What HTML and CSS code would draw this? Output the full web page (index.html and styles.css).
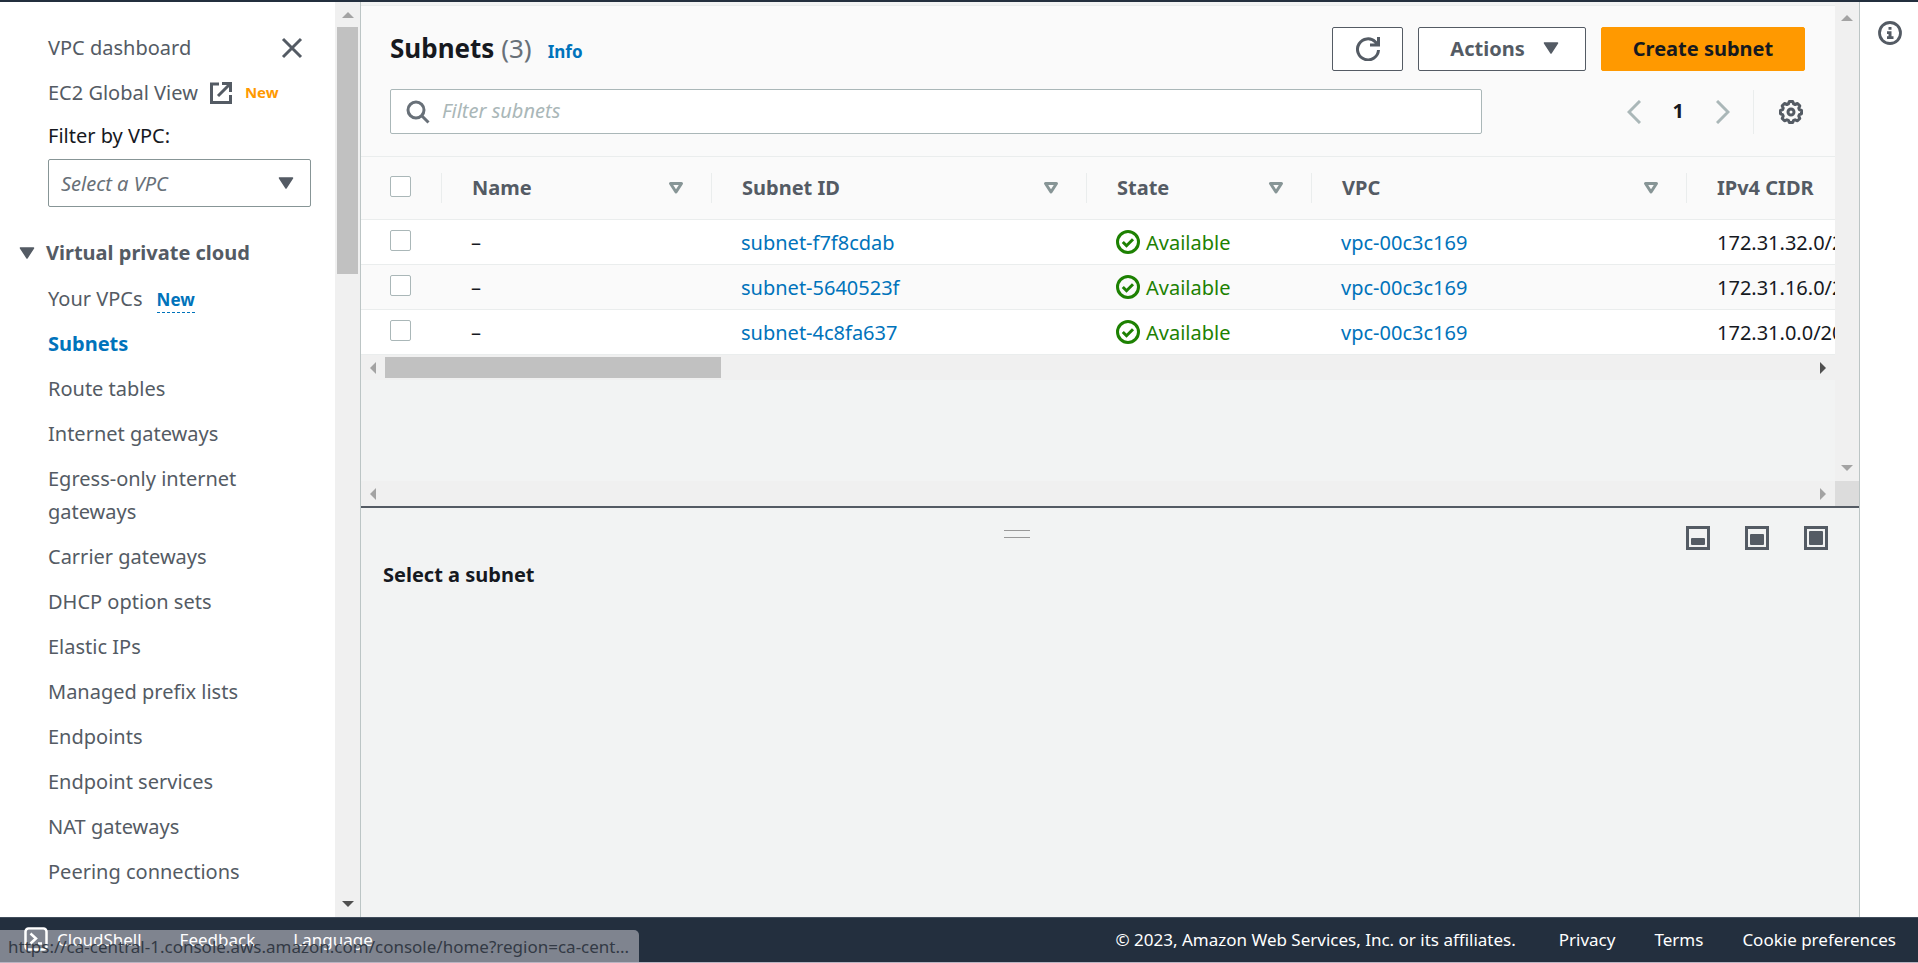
FILE: index.html
```html
<!DOCTYPE html>
<html lang="en">
<head>
<meta charset="utf-8">
<title>Subnets | VPC Management Console</title>
<link rel="stylesheet" href="styles.css">
</head>
<body>
<svg class="sprite" aria-hidden="true">
  <symbol id="sort" viewBox="0 0 16 14"><path d="M2.500 2.500h11L8 11z" fill="none" stroke="#879596" stroke-width="3" stroke-linejoin="round"/></symbol>
  <symbol id="caret" viewBox="0 0 16 14"><path d="M1.500 2h13L8 12z" fill="#545b64" stroke="#545b64" stroke-width="1.500" stroke-linejoin="round"/></symbol>
  <symbol id="ok" viewBox="0 0 24 24"><g fill="none" stroke="#1d8102" stroke-width="3"><circle cx="12" cy="12" r="10.500"/><path d="M6.800 12l3.700 3.700 6.500-6.500"/></g></symbol>
  <symbol id="up" viewBox="0 0 12 12"><path d="M0 9h12L6 3z"/></symbol>
  <symbol id="down" viewBox="0 0 12 12"><path d="M0 3h12L6 9z"/></symbol>
  <symbol id="left" viewBox="0 0 12 12"><path d="M9 0v12L3 6z"/></symbol>
  <symbol id="right" viewBox="0 0 12 12"><path d="M3 0v12l6-6z"/></symbol>
</svg>
<div class="app">
  <div class="topbar"></div>
  <div class="workspace">
    <aside class="sidebar">
      <nav class="nav">
        <div class="nav-head">
          <a class="nav-link" href="#">VPC dashboard</a>
          <button class="icon-btn" type="button" aria-label="Close navigation"><svg width="22" height="22" viewBox="0 0 22 22"><path d="M2 2l18 18M20 2L2 20" fill="none" stroke="#545b64" stroke-width="3"/></svg></button>
        </div>
        <div class="nav-line">
          <a class="nav-link" href="#">EC2 Global View</a>
          <svg class="ext" width="22" height="22" viewBox="0 0 22 22" fill="none" stroke="#545b64" stroke-width="3"><path d="M9 2H1.500v18.500H20.500V13M12 1.500h8.500V10M20 2L8 14"/></svg>
          <span class="tag-orange">New</span>
        </div>
        <label class="filter-label" for="vpc">Filter by VPC:</label>
        <div class="select-wrap">
          <select id="vpc" class="select"><option>Select a VPC</option></select>
          <svg class="select-caret" width="16" height="14"><use href="#caret"/></svg>
        </div>
        <h2 class="nav-title"><svg width="16" height="14"><use href="#caret"/></svg>Virtual private cloud</h2>
        <ul class="nav-list">
          <li><a class="nav-link" href="#">Your VPCs</a><a class="tag-blue" href="#">New</a></li>
          <li><a class="nav-link active" href="#">Subnets</a></li>
          <li><a class="nav-link" href="#">Route tables</a></li>
          <li><a class="nav-link" href="#">Internet gateways</a></li>
          <li><a class="nav-link" href="#">Egress-only internet gateways</a></li>
          <li><a class="nav-link" href="#">Carrier gateways</a></li>
          <li><a class="nav-link" href="#">DHCP option sets</a></li>
          <li><a class="nav-link" href="#">Elastic IPs</a></li>
          <li><a class="nav-link" href="#">Managed prefix lists</a></li>
          <li><a class="nav-link" href="#">Endpoints</a></li>
          <li><a class="nav-link" href="#">Endpoint services</a></li>
          <li><a class="nav-link" href="#">NAT gateways</a></li>
          <li><a class="nav-link" href="#">Peering connections</a></li>
        </ul>
      </nav>
      <div class="vbar">
        <svg class="muted" width="12" height="12"><use href="#up"/></svg>
        <div class="vtrack"><div class="vthumb"></div></div>
        <svg class="strong" width="12" height="12"><use href="#down"/></svg>
      </div>
    </aside>

    <main class="main">
      <div class="upper">
        <div class="upper-body">
          <section class="card">
            <header class="card-head">
              <div class="title-row">
                <h1 class="title">Subnets <span class="count">(3)</span></h1>
                <a class="info" href="#">Info</a>
                <div class="actions">
                  <button class="btn btn-icon" type="button" aria-label="Refresh"><svg width="24" height="24" viewBox="0 0 24 24" fill="none" stroke="#545b64" stroke-width="3"><path d="M22.500 13A10.500 10.500 0 1 1 19.500 5L22 8M22.500 0v8H14"/></svg></button>
                  <button class="btn btn-menu" type="button">Actions<svg width="16" height="14"><use href="#caret"/></svg></button>
                  <button class="btn btn-primary" type="button">Create subnet</button>
                </div>
              </div>
              <div class="filter-row">
                <div class="search">
                  <svg width="24" height="24" viewBox="0 0 24 24" fill="none" stroke="#687078" stroke-width="3"><circle cx="10" cy="10" r="8"/><path d="M15.500 15.500L22.500 22.500"/></svg>
                  <input type="text" placeholder="Filter subnets" aria-label="Filter subnets">
                </div>
                <div class="pager">
                  <button class="icon-btn" type="button" aria-label="Previous page"><svg width="14" height="24" viewBox="0 0 14 24"><path d="M13 1L2 12l11 11" fill="none" stroke="#aab7b8" stroke-width="3"/></svg></button>
                  <button class="icon-btn page" type="button">1</button>
                  <button class="icon-btn" type="button" aria-label="Next page"><svg width="14" height="24" viewBox="0 0 14 24"><path d="M1 1l11 11L1 23" fill="none" stroke="#aab7b8" stroke-width="3"/></svg></button>
                </div>
                <div class="prefs">
                  <button class="icon-btn" type="button" aria-label="Preferences"><svg width="24" height="24" viewBox="0 0 24 24" fill="none" stroke="#545b64" stroke-width="3" stroke-linejoin="round"><path d="M10.300 1.500h3.400l.9 2.400 1.500.6 2.400-1 2.300 2.300-1 2.400.6 1.500 2.100.8v3.300l-2.100.8-.6 1.500 1 2.400-2.300 2.300-2.400-1-1.500.6-.9 2.100h-3.400l-.9-2.100-1.500-.6-2.400 1-2.300-2.300 1-2.400-.6-1.500-2.100-.8v-3.300l2.100-.8.6-1.500-1-2.400 2.300-2.300 2.400 1 1.500-.6z"/><circle cx="12" cy="12" r="3"/></svg></button>
                </div>
              </div>
            </header>
            <div class="table-wrap">
              <table class="table">
                <colgroup><col class="c-check"><col class="c-name"><col class="c-id"><col class="c-state"><col class="c-vpc"><col class="c-cidr"></colgroup>
                <thead>
                  <tr>
                    <th><div class="th"><input type="checkbox" aria-label="Select all"></div></th>
                    <th><div class="th">Name<svg width="16" height="14"><use href="#sort"/></svg></div></th>
                    <th><div class="th">Subnet ID<svg width="16" height="14"><use href="#sort"/></svg></div></th>
                    <th><div class="th">State<svg width="16" height="14"><use href="#sort"/></svg></div></th>
                    <th><div class="th">VPC<svg width="16" height="14"><use href="#sort"/></svg></div></th>
                    <th><div class="th">IPv4 CIDR</div></th>
                  </tr>
                </thead>
                <tbody>
                  <tr>
                    <td><input type="checkbox" aria-label="Select subnet-f7f8cdab"></td><td>–</td>
                    <td><a href="#">subnet-f7f8cdab</a></td>
                    <td><span class="state"><svg width="24" height="24"><use href="#ok"/></svg>Available</span></td>
                    <td><a href="#">vpc-00c3c169</a></td><td>172.31.32.0/20</td>
                  </tr>
                  <tr>
                    <td><input type="checkbox" aria-label="Select subnet-5640523f"></td><td>–</td>
                    <td><a href="#">subnet-5640523f</a></td>
                    <td><span class="state"><svg width="24" height="24"><use href="#ok"/></svg>Available</span></td>
                    <td><a href="#">vpc-00c3c169</a></td><td>172.31.16.0/20</td>
                  </tr>
                  <tr>
                    <td><input type="checkbox" aria-label="Select subnet-4c8fa637"></td><td>–</td>
                    <td><a href="#">subnet-4c8fa637</a></td>
                    <td><span class="state"><svg width="24" height="24"><use href="#ok"/></svg>Available</span></td>
                    <td><a href="#">vpc-00c3c169</a></td><td>172.31.0.0/20</td>
                  </tr>
                </tbody>
              </table>
            </div>
            <div class="hbar">
              <svg class="muted" width="12" height="12"><use href="#left"/></svg>
              <div class="htrack"><div class="hthumb"></div></div>
              <svg class="strong" width="12" height="12"><use href="#right"/></svg>
            </div>
          </section>
          <div class="hbar">
            <svg class="muted" width="12" height="12"><use href="#left"/></svg>
            <div class="htrack"></div>
            <svg class="muted" width="12" height="12"><use href="#right"/></svg>
          </div>
        </div>
        <div class="upper-bar">
          <div class="vbar">
            <svg class="muted" width="12" height="12"><use href="#up"/></svg>
            <div class="vtrack"></div>
            <svg class="muted" width="12" height="12"><use href="#down"/></svg>
          </div>
          <div class="corner"></div>
        </div>
      </div>
      <section class="lower">
        <div class="lower-tools">
          <div class="grip"></div>
          <div class="layouts">
            <button class="icon-btn" type="button" aria-label="Small panel"><svg width="24" height="24" viewBox="0 0 24 24"><rect x="1.500" y="1.500" width="21" height="21" fill="none" stroke="#545b64" stroke-width="3"/><rect x="5" y="12" width="14" height="7" rx="1" fill="#545b64"/></svg></button>
            <button class="icon-btn" type="button" aria-label="Medium panel"><svg width="24" height="24" viewBox="0 0 24 24"><rect x="1.500" y="1.500" width="21" height="21" fill="none" stroke="#545b64" stroke-width="3"/><rect x="5" y="8" width="14" height="11" rx="1" fill="#545b64"/></svg></button>
            <button class="icon-btn" type="button" aria-label="Full panel"><svg width="24" height="24" viewBox="0 0 24 24"><rect x="1.500" y="1.500" width="21" height="21" fill="none" stroke="#545b64" stroke-width="3"/><rect x="5" y="5" width="14" height="14" rx="1" fill="#545b64"/></svg></button>
          </div>
        </div>
        <h2 class="lower-title">Select a subnet</h2>
      </section>
    </main>

    <aside class="help">
      <button class="icon-btn" type="button" aria-label="Open help"><svg width="24" height="24" viewBox="0 0 24 24"><circle cx="12" cy="12" r="10.500" fill="none" stroke="#545b64" stroke-width="2.800"/><path d="M10.500 6h3v2.800h-3zM9 10.300h4.500v5H15.500V18H9v-2.700h1.500v-2.300H9z" fill="#545b64"/></svg></button>
    </aside>
  </div>

  <footer class="footer">
    <a class="shell" href="#"><svg width="24" height="24" viewBox="0 0 24 24" fill="none" stroke="#fff" stroke-width="2.500"><rect x="1.500" y="1.500" width="21" height="21" rx="3"/><path d="M6.500 6.500l5.500 5-5.500 5M14 16.500h4"/></svg>CloudShell</a>
    <a class="feedback" href="#">Feedback</a>
    <a href="#">Language</a>
    <span class="copyright">© 2023, Amazon Web Services, Inc. or its affiliates.</span>
    <a class="legal" href="#">Privacy</a>
    <a class="legal" href="#">Terms</a>
    <a class="legal" href="#">Cookie preferences</a>
    <div class="status"><span class="status-url">https://ca-central-1.console.aws.amazon.com/console/home?region=ca-cent...</span></div>
  </footer>
</div>
</body>
</html>
```
FILE: styles.css
```css
* { box-sizing: border-box; }

body {
  margin: 0;
  font: 20px/33px "Noto Sans", "Open Sans", sans-serif;
  color: #16191f;
  background: #fff;
}

a { color: #0073bb; text-decoration: none; }
h1, h2, ul { margin: 0; padding: 0; }
svg { display: block; flex: none; }
.sprite { display: none; }
button, input, select { font: inherit; color: inherit; }

.app { height: 100vh; display: flex; flex-direction: column; }
.topbar { flex: none; height: 2px; background: #232f3e; }
.workspace { flex: 1; min-height: 0; display: flex; }

.icon-btn {
  display: flex;
  padding: 0;
  border: 0;
  background: none;
}

/* Sidebar */
.sidebar { flex: none; width: 361px; display: flex; border-right: 1px solid #bcc5c5; }
.nav { flex: 1; padding: 29px 24px 0 19px; overflow: hidden; }
.nav-link { color: #545b64; }
.nav-link.active { color: #0073bb; font-weight: 700; }
.nav-head { display: flex; align-items: center; justify-content: space-between; padding: 0 8px 0 29px; }
.nav-line { display: flex; align-items: center; padding-left: 29px; margin-top: 12px; }
.ext { margin-left: 12px; }
.tag-orange { margin-left: 13px; font-size: 15px; font-weight: 700; color: #ff9900; }
.filter-label { display: block; margin: 10px 0 7px 29px; }
.select-wrap { position: relative; margin-left: 29px; }
.select {
  display: block;
  width: 100%;
  height: 48px;
  padding: 0 12px;
  border: 1px solid #879596;
  border-radius: 2px;
  background: #fff;
  color: #687078;
  font-style: italic;
  appearance: none;
}
.select-caret { position: absolute; right: 17px; top: 17px; pointer-events: none; }
.nav-title {
  display: flex;
  align-items: center;
  gap: 11px;
  margin-top: 29px;
  font-size: 20px;
  color: #545b64;
}
.nav-list { list-style: none; padding-left: 29px; margin-top: 13px; }
.nav-list li { margin-bottom: 12px; }
.tag-blue {
  display: inline-block;
  margin-left: 14px;
  font-size: 17px;
  line-height: 24px;
  font-weight: 700;
  border-bottom: 1px dashed #0073bb;
}

/* Drawn scrollbars */
.vbar {
  flex: none;
  width: 25px;
  padding: 7px 0;
  display: flex;
  flex-direction: column;
  align-items: center;
  gap: 6px;
  background: #f0f0f0;
}
.vtrack { flex: 1; width: 21px; }
.vthumb { height: 247px; background: #c1c1c1; }
.hbar {
  flex: none;
  height: 25px;
  padding: 0 6px;
  display: flex;
  align-items: center;
  gap: 6px;
  background: #f0f0f0;
}
.htrack { flex: 1; height: 21px; }
.hthumb { width: 336px; height: 21px; background: #c1c1c1; }
.muted { fill: #a3a3a3; }
.strong { fill: #505050; }

/* Main area */
.main { flex: 1; min-width: 0; display: grid; grid-template-rows: 504fr 411fr; background: #f2f3f3; }
.upper { display: flex; min-height: 0; }
.upper-body { flex: 1; min-width: 0; display: flex; flex-direction: column; justify-content: space-between; }
.upper-bar { display: flex; flex-direction: column; }
.upper-bar .vbar { flex: 1; width: 24px; padding-top: 10px; }
.corner { height: 25px; background: #dcdcdc; }

.card { margin-top: 3px; border-top: 1px solid #eaeded; }
.card-head { padding: 21px 30px 22px 29px; background: #fafafa; border-bottom: 1px solid #eaeded; }
.title-row { display: flex; align-items: center; }
.title { padding-bottom: 2px; font-size: 26px; line-height: 33px; }
.count { font-weight: 400; color: #687078; }
.info { margin: 4px 0 0 16px; font-size: 17px; font-weight: 700; }
.actions { margin-left: auto; display: flex; gap: 15px; }
.btn {
  height: 44px;
  display: flex;
  align-items: center;
  justify-content: center;
  border: 1px solid #545b64;
  border-radius: 2px;
  background: #fff;
  color: #545b64;
  font-weight: 700;
}
.btn-icon { width: 71px; }
.btn-menu { width: 168px; gap: 18px; padding: 0 0 2px 5px; }
.btn-primary { width: 204px; padding: 0 0 2px; border-color: #ff9900; background: #ff9900; color: #16191f; }

.filter-row { display: flex; align-items: center; margin-top: 18px; }
.search {
  flex: 1;
  height: 45px;
  display: flex;
  align-items: center;
  gap: 12px;
  padding: 0 15px;
  border: 1px solid #aab7b8;
  border-radius: 2px;
  background: #fff;
}
.search input { flex: 1; min-width: 0; padding: 0 0 2px; border: 0; outline: 0; background: none; }
.search input::placeholder { color: #aab7b8; font-style: italic; opacity: 1; }
.pager { display: flex; align-items: center; gap: 32px; margin-left: 145px; }
.page { padding-bottom: 2px; font-weight: 700; }
.prefs { display: flex; align-items: center; height: 44px; margin-left: 23px; padding: 0 2px 0 25px; border-left: 1px solid #eaeded; }

/* Table */
.table-wrap { overflow: hidden; }
.table { width: 100%; table-layout: fixed; border-collapse: separate; border-spacing: 0; background: #fff; }
.c-check { width: 81px; }
.c-name { width: 270px; }
.c-id { width: 375px; }
.c-state { width: 225px; }
.c-vpc { width: 375px; }
.table th { padding: 16px 0; background: #fafafa; border-bottom: 1px solid #eaeded; }
.th {
  display: flex;
  align-items: center;
  justify-content: space-between;
  height: 30px;
  padding: 0 27px 2px 30px;
  border-right: 1px solid #eaeded;
  color: #545b64;
  white-space: nowrap;
}
.th svg { margin-top: 2px; }
.table th:first-child .th { padding: 0 0 4px 29px; }
.table th:last-child .th { border-right: 0; padding-right: 0; }
.table td { height: 45px; padding: 0 0 0 29px; border-bottom: 1px solid #eaeded; white-space: nowrap; vertical-align: middle; }
.table td:last-child { padding-left: 30px; }
.table tbody tr:nth-child(even) { background: #fafafa; }
.table input {
  display: block;
  width: 21px;
  height: 21px;
  margin: 0;
  border: 1px solid #aab7b8;
  border-radius: 2px;
  background: #fff;
  appearance: none;
}
.table td input { margin-bottom: 4px; }
.state { display: flex; align-items: center; gap: 6px; color: #1d8102; }

/* Split panel */
.lower { border-top: 2px solid #545b64; }
.lower-tools { display: grid; grid-template-columns: 643fr 26px 798fr; padding: 18px 31px 0 0; }
.grip { grid-column: 2; height: 8px; margin-top: 4px; border: solid #999; border-width: 1px 0; }
.layouts { display: flex; justify-content: flex-end; gap: 35px; }
.lower-title { margin: 8px 0 0 22px; font-size: 20px; }

.help { flex: none; width: 59px; padding: 19px 16px 0 18px; border-left: 1px solid #bcc5c5; }

/* Footer */
.footer {
  position: relative;
  flex: none;
  height: 46px;
  display: flex;
  align-items: center;
  padding: 0 22px 2px 24px;
  border-top: 1px solid #414d5c;
  border-bottom: 1px solid #b9b4c2;
  background: #232f3e;
  color: #fff;
  font-size: 17px;
  white-space: nowrap;
}
.footer a { position: relative; z-index: 1; color: #fff; }
.shell { display: flex; align-items: center; gap: 9px; }
.feedback { margin: 0 38px; }
.copyright { margin-left: auto; margin-right: 4px; }
.legal { margin-left: 39px; }

/* Link preview: its panel lies under the footer links, its text over them */
.status {
  position: absolute;
  left: 0;
  bottom: 0;
  height: 32px;
  padding: 0 10px 0 8px;
  color: #333a45;
}
.status::before {
  content: "";
  position: absolute;
  inset: 0;
  z-index: 0;
  border-radius: 0 5px 0 0;
  background: #7f848f;
}
.status-url { position: relative; z-index: 2; }
```
